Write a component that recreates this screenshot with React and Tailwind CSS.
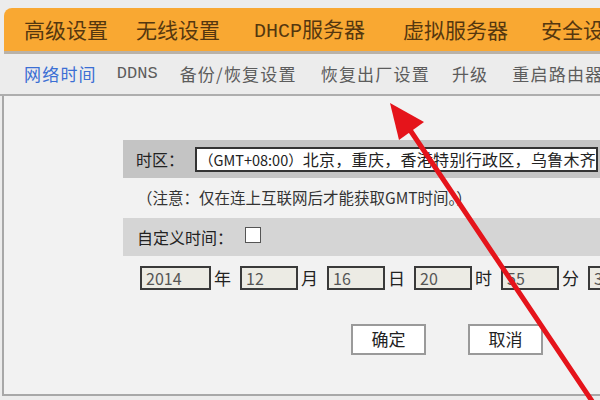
import React from 'react';

const cjk = { fontFamily: '"Noto Sans CJK SC", "Noto Sans", sans-serif' };
const mono = { fontFamily: '"Liberation Mono", "DejaVu Sans Mono", monospace' };

function DateField({ value, unit, wide }) {
    return (
        <div className="flex items-center">
            <div className={(wide ? 'w-[71px]' : 'w-[58px]') + ' h-[24px] bg-[#ecebe4] border-2 border-[#3a3a3a] pl-[4px] text-[16px] leading-[20px] text-[#555]'} style={cjk}>
                {value}
            </div>
            <span className="ml-[3px] text-[17px] text-[#222]" style={cjk}>{unit}</span>
        </div>
    );
}

export default function App() {
    return (
        <div className="relative w-[600px] h-[400px] overflow-hidden bg-[#ececec]">
            {/* top orange bar */}
            <div className="pt-[8px] pl-[4px]">
                <div className="h-[46px] bg-[#f9a832] rounded-tl-[8px] border-b-[3px] border-[#b9b2a8] flex items-center pl-[20px] text-[21px] text-[#55370f] whitespace-nowrap" style={cjk}>
                    <span>高级设置</span>
                    <span className="ml-[28px]">无线设置</span>
                    <span className="ml-[34px]"><span className="text-[20px]" style={mono}>DHCP</span>服务器</span>
                    <span className="ml-[38px]">虚拟服务器</span>
                    <span className="ml-[33px]">安全设置</span>
                </div>
            </div>

            {/* sub navigation */}
            <div className="h-[42px] flex items-center pl-[24px] text-[17px] tracking-[1.2px] text-[#5c5c5c] whitespace-nowrap border-b-2 border-[#aeaeae]" style={cjk}>
                <span className="text-[#3b6fd4]">网络时间</span>
                <span className="ml-[20px] text-[17px] tracking-normal" style={mono}>DDNS</span>
                <span className="ml-[22px]">备份/恢复设置</span>
                <span className="ml-[24px]">恢复出厂设置</span>
                <span className="ml-[22px]">升级</span>
                <span className="ml-[24px]">重启路由器</span>
            </div>

            {/* content panel */}
            <div className="ml-[2px] h-[300px] bg-[#f2f2f2] border-l-2 border-b-2 border-[#a8a8a8] pt-[44px] pl-[119px] text-[#222]" style={cjk}>
                <div className="h-[38px] w-[520px] bg-[#c4c4c4] flex items-center pl-[13px]">
                    <span className="text-[16px] w-[59px] shrink-0">时区：</span>
                    <div className="w-[403px] shrink-0 h-[25px] bg-white border-2 border-[#333] pl-[2px] leading-[21px] whitespace-nowrap overflow-hidden">
                        <span className="text-[14.5px]">（GMT+08:00）</span>
                        <span className="text-[16px] tracking-[0.3px]">北京，重庆，香港特别行政区，乌鲁木齐</span>
                    </div>
                </div>
                <div className="h-[40px] flex items-center pl-[14px] text-[15.5px] text-[#333] whitespace-nowrap">
                    （注意：仅在连上互联网后才能获取GMT时间。）
                </div>
                <div className="h-[38px] w-[520px] bg-[#d5d5d5] flex items-center pl-[14px]">
                    <span className="text-[16px]">自定义时间：</span>
                    <div className="ml-[12px] mb-[4px] w-[16px] h-[16px] bg-white border border-[#555]" />
                </div>
                <div className="mt-[9px] ml-[17px] flex items-center gap-[9px] whitespace-nowrap">
                    <DateField value="2014" unit="年" wide />
                    <DateField value="12" unit="月" />
                    <DateField value="16" unit="日" />
                    <DateField value="20" unit="时" />
                    <DateField value="55" unit="分" />
                    <DateField value="30" unit="秒" />
                </div>
                <div className="mt-[33px] ml-[228px] flex gap-[42px]">
                    <button className="w-[75px] h-[31px] bg-white border-2 border-[#9a9a9a] text-[17px] text-[#222]">确定</button>
                    <button className="w-[75px] h-[31px] bg-white border-2 border-[#9a9a9a] text-[17px] text-[#222]">取消</button>
                </div>
            </div>

            {/* red annotation arrow */}
            <svg className="absolute left-0 top-0 pointer-events-none" width="600" height="400" viewBox="0 0 600 400">
                <line x1="594" y1="404" x2="404" y2="121" stroke="#e5141b" strokeWidth="5" strokeLinecap="round" />
                <polygon points="390,103 424,122 399,140" fill="#e5141b" />
            </svg>
        </div>
    );
}
